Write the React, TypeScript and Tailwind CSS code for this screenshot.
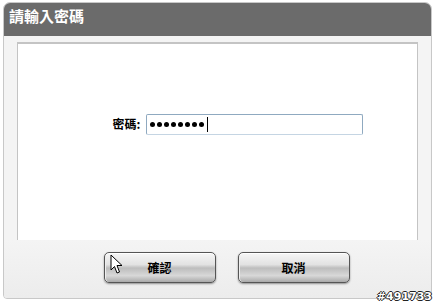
import React from 'react';

const cjk = '"Noto Sans CJK TC", "Noto Sans", sans-serif';

function GlossButton({ label }: { label: string }) {
  return (
    <button
      className="relative flex h-[31px] w-[112px] items-center justify-center rounded-[5px] border border-[#555] bg-[linear-gradient(#f6f6f6_0%,#e2e2e2_40%,#bdbdbd_52%,#d8d8d8_78%,#a9a9a9_100%)] text-[12px] font-bold text-black shadow-[0_1px_2px_rgba(0,0,0,0.4),inset_0_1px_0_#fff,inset_1px_0_0_#eee]"
    >
      {label}
    </button>
  );
}

// arrow pointer as in the screenshot
function Cursor() {
  return (
    <svg width="14" height="21" viewBox="0 0 14 21" className="absolute left-[110px] top-[252px]">
      <path d="M1 1 L1 16 L4.5 12.5 L7 19 L9.5 18 L7 11.5 L12 11.5 Z" fill="#fff" stroke="#000" strokeWidth="1" strokeLinejoin="round" />
    </svg>
  );
}

export default function App() {
  const dots = Array.from({ length: 8 });
  return (
    <div className="relative h-[305px] w-[435px] bg-white" style={{ fontFamily: cjk }}>
      <div className="ml-[3px] mt-[2px] flex h-[297px] w-[429px] flex-col overflow-hidden rounded-t-[7px] rounded-b-[4px] border border-[#c8c8c8] bg-[#f4f4f4]">
        <div className="flex h-[33px] items-start bg-[#6b6b6b] px-[5px] pt-[3px]">
          <span className="text-[15px] font-bold leading-[20px] text-white">請輸入密碼</span>
        </div>
        <div className="mx-[13px] mt-[6px] flex h-[198px] items-center justify-center border-t-2 border-x border-[#c4c4c4] border-b-0 bg-white pb-[36px] pl-[41px]">
          <div className="flex items-center gap-[6px]">
            <span className="text-[12px] font-bold text-black">密碼:</span>
            <div className="flex h-[21px] w-[217px] items-center gap-[2px] rounded-[2px] border border-[#8fa9c0] border-b-[#c5d5e3] px-[3px]">
              {dots.map((_, i) => (
                <span key={i} className="h-[5px] w-[5px] rounded-full bg-black" />
              ))}
              <span className="ml-[1px] h-[15px] w-px bg-black" />
            </div>
          </div>
        </div>
        <div className="flex flex-1 items-start justify-center gap-[22px] bg-[linear-gradient(#f4f4f4,#ececec)] pl-[18px] pt-[12px]">
          <GlossButton label="確認" />
          <GlossButton label="取消" />
        </div>
      </div>
      <Cursor />
      <span
        className="absolute right-[3px] top-[289px] text-[11px] font-bold leading-[12px] text-white [text-shadow:-1px_0_#222,1px_0_#222,0_-1px_#222,0_1px_#222]"
        style={{ fontFamily: '"DejaVu Sans", sans-serif' }}
      >
        #491733
      </span>
    </div>
  );
}
